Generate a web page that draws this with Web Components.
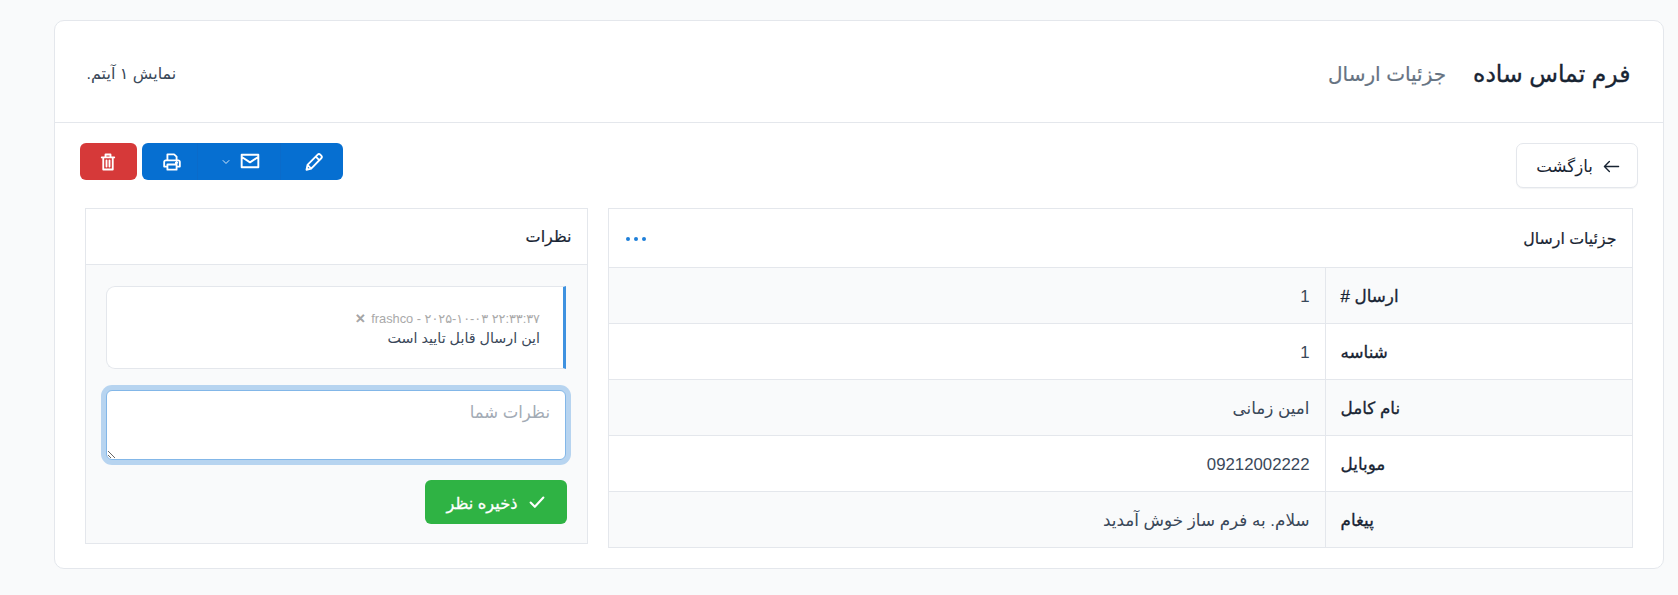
<!DOCTYPE html>
<html lang="fa" dir="rtl">
<head>
<meta charset="utf-8">
<title>جزئیات ارسال</title>
<style>
    html, body { margin: 0; background: #f9fafb; }
    body { font-family: "Liberation Sans", "DejaVu Sans", sans-serif; color: #182433; font-size: 16px; }
</style>
</head>
<body>
<page-card>
    <page-header slot="header">
        <span slot="title">فرم تماس ساده</span>
        <span slot="subtitle">جزئیات ارسال</span>
        <span slot="count">نمایش ۱ آیتم.</span>
    </page-header>
    <action-bar></action-bar>
    <div slot="panels">
        <detail-panel heading="جزئیات ارسال">
            <detail-row label="ارسال #" striped>1</detail-row>
            <detail-row label="شناسه">1</detail-row>
            <detail-row label="نام کامل" striped>امین زمانی</detail-row>
            <detail-row label="موبایل">09212002222</detail-row>
            <detail-row label="پیغام" striped>سلام. به فرم ساز خوش آمدید</detail-row>
        </detail-panel>
    </div>
    <comments-panel slot="aside" heading="نظرات">
        <comment-item author="frashco" date="۲۲:۳۳:۳۷ ۲۰۲۵-۱۰-۰۳">این ارسال قابل تایید است</comment-item>
    </comments-panel>
</page-card>

<script>
/* Icons are stroke drawings on a 24 box */
const icons = {
    trash: '<path d="M4.5 6.5h15M9 6.5V3h6v3.5M6.3 6.5V21h11.4V6.5M10.2 10v7.5M13.8 10v7.5"/>',
    print: '<path d="M6.5 10V2.8h8L17.5 5.6V10M6.5 17.5H2.6v-5.6A1.9 1.9 0 0 1 4.5 10h15a1.9 1.9 0 0 1 1.9 1.9v5.6h-3.9M6.5 15h11v6.2h-11zM16.6 12.8h1.8M17.5 12v1.6"/>',
    mail: '<path d="M2 4.5h20v15H2zM2.6 7.5 12 13.6l9.4-6.1"/>',
    pencil: '<path d="M3 21.3l1.2-5.8L16.4 3.2a2.2 2.2 0 0 1 3.1 0l1.2 1.2a2.2 2.2 0 0 1 0 3.1L8.6 20zM14.2 5.6l4.1 4.1M4.2 15.5l4.4 4.5"/>',
    check: '<path d="M3.5 12.8l5.6 5.6L20.5 6"/>',
    chevron: '<path d="M5 8.5l7 7 7-7"/>',
    back: '<path d="M2 12h20M9 5 2 12l7 7"/>'
};

function icon(name, size, width) {
    return `<svg width="${size}" height="${size}" viewBox="0 0 24 24" fill="none" stroke="currentColor" stroke-width="${width}" stroke-linejoin="round" stroke-linecap="round">${icons[name]}</svg>`;
}

function makeTemplate(html) {
    const tmpl = document.createElement('template');
    tmpl.innerHTML = html;
    return tmpl;
}

/**
 * Outer card: header, toolbar, then the two panels
 */
const pageCardTmpl = makeTemplate(`
    <style>
        :host { display: block; margin: 20px 14.5px 0 54px; height: 549px; box-sizing: border-box;
                background: #fff; border: 1px solid #e4e7ec; border-radius: 10px; }
        .body { padding: 20px 25px 0 25px; }
        .panels { display: grid; grid-template-columns: 1024.5px 502.5px; column-gap: 20.5px;
                  align-items: start; margin: 20.5px 5px 0; }
    </style>
    <slot name="header"></slot>
    <div class="body">
        <slot></slot>
        <div class="panels">
            <slot name="panels"></slot>
            <slot name="aside"></slot>
        </div>
    </div>
`);
customElements.define('page-card', class PageCard extends HTMLElement {
    constructor() {
        super();
        this.attachShadow({mode: 'open'}).appendChild(pageCardTmpl.content.cloneNode(true));
    }
});

const pageHeaderTmpl = makeTemplate(`
    <style>
        :host { display: flex; align-items: center; justify-content: space-between; height: 102px;
                box-sizing: border-box; padding: 4px 32px 0 31.5px; border-bottom: 1px solid #e4e7ec; }
        .titles { display: flex; align-items: center; gap: 27px; }
        .title { font-size: 23.5px; -webkit-text-stroke: .35px #182433; color: #182433; }
        .subtitle { font-size: 20px; color: #667382; -webkit-text-stroke: .2px #667382; }
        .count { font-size: 16px; color: #3a4859; margin-top: -1px; }
    </style>
    <div class="titles">
        <span class="title"><slot name="title"></slot></span>
        <span class="subtitle"><slot name="subtitle"></slot></span>
    </div>
    <span class="count"><slot name="count"></slot></span>
`);
customElements.define('page-header', class PageHeader extends HTMLElement {
    constructor() {
        super();
        this.attachShadow({mode: 'open'}).appendChild(pageHeaderTmpl.content.cloneNode(true));
    }
});

const actionBarTmpl = makeTemplate(`
    <style>
        :host { display: flex; justify-content: space-between; align-items: flex-start; }
        button { font: inherit; border: 0; padding: 0; color: #fff; display: flex; align-items: center; justify-content: center; }
        .back { width: 122px; height: 44.5px; gap: 10px; background: #fff; color: #182433; font-size: 16.6px; padding: 3px 0 0 3px;
                box-sizing: border-box; border: 1px solid #e4e7ec; border-radius: 7px; box-shadow: 0 1px 1px rgba(24,36,51,.05); }
        .tools { display: flex; gap: 5.5px; height: 37px; }
        .group { display: flex; width: 200.5px; background: #066fd1; border-radius: 6px; overflow: hidden; }
        .group button { background: none; height: 37px; }
        .edit { width: 62.5px; padding-left: 5px !important; box-sizing: border-box; border-left: 1px solid #0a6bca !important; }
        .send { width: 83px; box-sizing: border-box; gap: 9px; justify-content: flex-start; border-left: 1px solid #0a6bca !important; }
        .send svg:first-child { margin-right: 20px; margin-top: -1px; }
        .print { flex: 1; padding-left: 5px !important; }
        .trash { width: 56.5px; background: #d63939; border-radius: 6px; }
    </style>
    <button class="back">${icon('back', 17, 1.9)}<span>بازگشت</span></button>
    <div class="tools">
        <div class="group">
            <button class="edit" title="edit">${icon('pencil', 20, 2.2)}</button>
            <button class="send" title="mail">${icon('mail', 20, 2.3)}${icon('chevron', 10, 2)}</button>
            <button class="print" title="print">${icon('print', 20, 2.2)}</button>
        </div>
        <button class="trash" title="delete">${icon('trash', 20, 2.2)}</button>
    </div>
`);
customElements.define('action-bar', class ActionBar extends HTMLElement {
    constructor() {
        super();
        this.attachShadow({mode: 'open'}).appendChild(actionBarTmpl.content.cloneNode(true));
    }
});

const detailPanelTmpl = makeTemplate(`
    <style>
        :host { display: block; background: #fff; border: 1px solid #e4e7ec; border-bottom: 0; }
        header { display: flex; justify-content: space-between; align-items: center; height: 59px;
                 box-sizing: border-box; padding: 0 15px 0 17px; font-size: 15.8px; -webkit-text-stroke: .2px #182433; border-bottom: 1px solid #e4e7ec; }
        .dots { display: flex; gap: 4px; margin-top: 1px; }
        .dots i { width: 4px; height: 4px; border-radius: 50%; background: #1e7fd9; }
    </style>
    <header><span class="heading"></span><span class="dots"><i></i><i></i><i></i></span></header>
    <slot></slot>
`);
customElements.define('detail-panel', class DetailPanel extends HTMLElement {
    constructor() {
        super();
        this.attachShadow({mode: 'open'}).appendChild(detailPanelTmpl.content.cloneNode(true));
        this.shadowRoot.querySelector('.heading').textContent = this.getAttribute('heading');
    }
});

const detailRowTmpl = makeTemplate(`
    <style>
        :host { display: grid; grid-template-columns: 307px 1fr; height: 56px; box-sizing: border-box;
                border-bottom: 1px solid #e4e7ec; font-size: 16.8px; }
        :host([striped]) { background: #f9fafb; }
        .label, .value { display: flex; align-items: center; padding: 2px 15px 0; }
        .label { justify-content: flex-end; -webkit-text-stroke: .3px #182433; border-left: 1px solid #e4e7ec; color: #182433; }
        .value { color: #3a4859; }
    </style>
    <div class="label"></div>
    <div class="value"><slot></slot></div>
`);
customElements.define('detail-row', class DetailRow extends HTMLElement {
    constructor() {
        super();
        this.attachShadow({mode: 'open'}).appendChild(detailRowTmpl.content.cloneNode(true));
        this.shadowRoot.querySelector('.label').textContent = this.getAttribute('label');
    }
});

const commentsPanelTmpl = makeTemplate(`
    <style>
        :host { display: block; height: 336px; box-sizing: border-box; background: #f9fafb; border: 1px solid #e4e7ec; }
        header { height: 56px; box-sizing: border-box; display: flex; align-items: center; padding: 0 15px;
                 font-size: 16px; -webkit-text-stroke: .2px #182433; background: #fff; border-bottom: 1px solid #e4e7ec; }
        .body { padding: 20.5px 20.5px 0 20px; }
        textarea { display: block; width: 100%; height: 70px; box-sizing: border-box; margin-top: 20.5px;
                   padding: 12px 15px; font: 16.5px "Liberation Sans", "DejaVu Sans", sans-serif; background: #fff; color: #182433; resize: vertical; outline: 0;
                   border: 1px solid #83b7e8; border-radius: 6px; box-shadow: 0 0 0 5px rgba(6,111,209,.27); }
        textarea::placeholder { color: #a3abb5; opacity: 1; }
        .actions { display: flex; margin: 20px -1px 0 0; }
        button { display: flex; align-items: center; gap: 10px; width: 142px; height: 44px; box-sizing: border-box; justify-content: center;
                 border: 0; border-radius: 6px; background: #2fb344; color: #fff;
                 font: 16.3px "Liberation Sans", "DejaVu Sans", sans-serif; }
        button span { -webkit-text-stroke: .3px #fff; padding-top: 3px; }
    </style>
    <header class="heading"></header>
    <div class="body">
        <slot></slot>
        <textarea placeholder="نظرات شما"></textarea>
        <div class="actions"><button>${icon('check', 18, 2.8)}<span>ذخیره نظر</span></button></div>
    </div>
`);
customElements.define('comments-panel', class CommentsPanel extends HTMLElement {
    constructor() {
        super();
        this.attachShadow({mode: 'open'}).appendChild(commentsPanelTmpl.content.cloneNode(true));
        this.shadowRoot.querySelector('.heading').textContent = this.getAttribute('heading');
    }
});

const commentItemTmpl = makeTemplate(`
    <style>
        :host { display: flex; flex-direction: column; justify-content: center; height: 83.5px; box-sizing: border-box; padding: 2px 23px 0;
                background: #fff; border: 1px solid #e4e7ec; border-right: 3px solid #3f92e0; border-radius: 9px 0 0 9px; font-size: 14.3px; color: #3a4859; gap: 4px; }
        .meta { font-size: 12.8px; color: #a9a9a9; }
        .meta b { font-weight: 700; margin-right: 2px; -webkit-text-stroke: .5px #9a9a9a; }
    </style>
    <div class="meta"><span class="date"></span> - <span class="author"></span> <b>✕</b></div>
    <div><slot></slot></div>
`);
customElements.define('comment-item', class CommentItem extends HTMLElement {
    constructor() {
        super();
        this.attachShadow({mode: 'open'}).appendChild(commentItemTmpl.content.cloneNode(true));
        this.shadowRoot.querySelector('.date').textContent = this.getAttribute('date');
        this.shadowRoot.querySelector('.author').textContent = this.getAttribute('author');
    }
});
</script>
</body>
</html>
